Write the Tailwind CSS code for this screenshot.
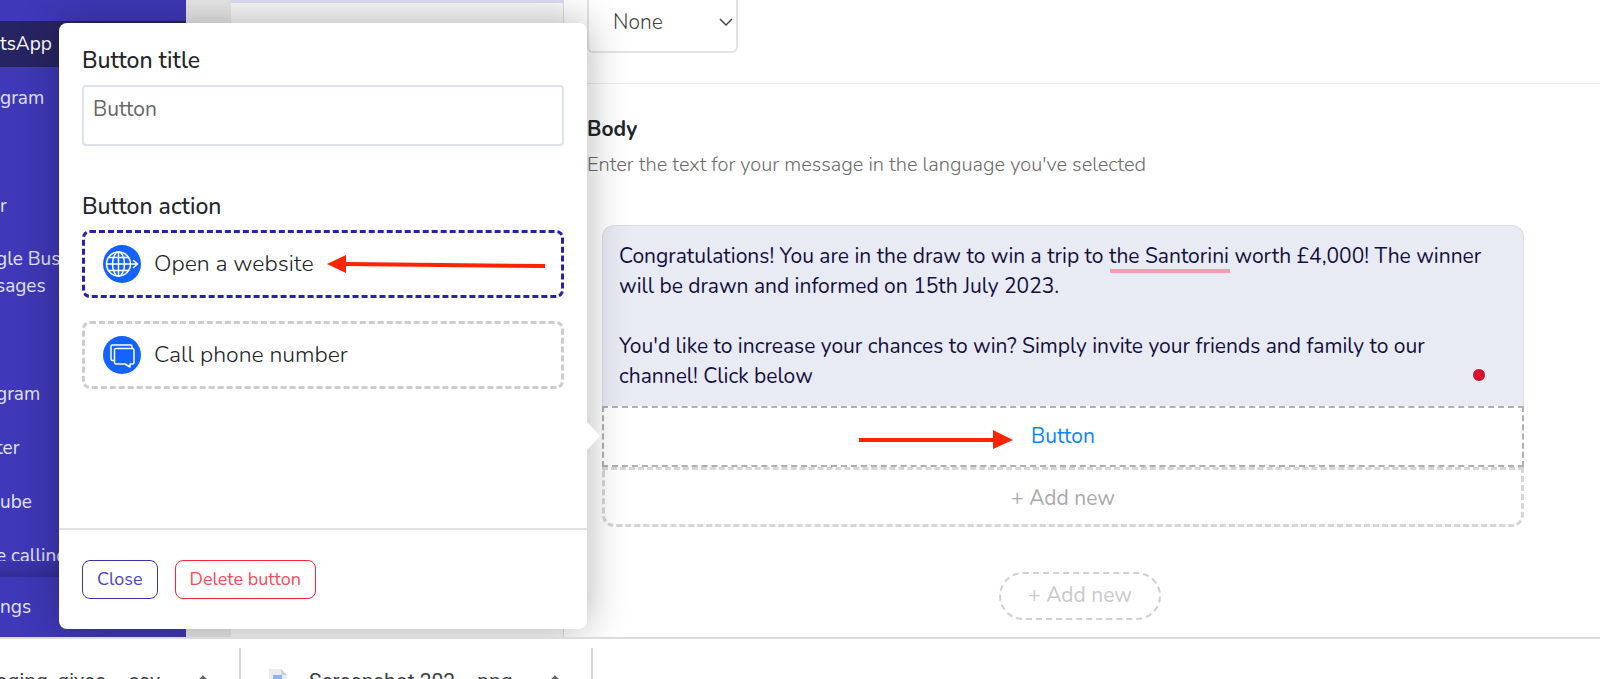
<!DOCTYPE html>
<html lang="en">
<head>
  <meta charset="UTF-8" />
  <meta name="viewport" content="width=device-width, initial-scale=1" />
  <title>Message Template</title>
  <script src="https://cdn.jsdelivr.net/npm/@tailwindcss/browser@4"></script>
</head>
<body class="h-screen flex flex-col overflow-hidden bg-white font-['Nunito','Lato',sans-serif] text-[#212529]">

  <div class="relative flex flex-1 min-h-0">

    <!-- Sidebar -->
    <aside class="w-[186px] shrink-0 flex flex-col overflow-hidden bg-[#3f38b8] text-[#e4e3f6] text-[19px] leading-[27px]">
      <nav class="flex-1 min-h-0 overflow-hidden whitespace-nowrap">
        <a href="#" class="-mt-[37px] h-[54px] flex items-center pl-2">ng</a>
        <a href="#" class="my-1 h-[46px] flex items-center bg-[#272463] text-white">tsApp</a>
        <a href="#" class="h-[54px] flex items-center">gram</a>
        <div class="h-[54px]"></div>
        <a href="#" class="h-[54px] flex items-center">r</a>
        <a href="#" class="-ml-1 h-[80px] flex items-center">gle Business<br>sages</a>
        <div class="h-[54px]"></div>
        <a href="#" class="-ml-1 h-[54px] flex items-center">gram</a>
        <a href="#" class="-ml-1 h-[54px] flex items-center">ter</a>
        <a href="#" class="h-[54px] flex items-center">ube</a>
        <a href="#" class="-ml-1 h-[54px] flex items-center">e calling</a>
      </nav>
      <div class="h-4 bg-linear-to-b from-[#3c35b0] to-[#332d98]"></div>
      <a href="#" class="h-[60px] flex items-center">ngs</a>
    </aside>

    <!-- Template list -->
    <div class="w-[45px] shrink-0 bg-[#e8e8e8]"></div>
    <div class="w-[333px] shrink-0 bg-[#f9f9f9] border-r border-[#dedede]">
      <div class="h-[3px] bg-[#dcdcf4]"></div>
    </div>

    <!-- Template editor -->
    <main class="flex-1 min-w-0">
      <div class="flex h-[84px] border-b border-[#ebebeb] pl-[23px]">
        <div class="relative w-[151px] -mt-2">
          <select aria-label="Header" class="w-full h-[61px] appearance-none rounded-md border-2 border-[#e4e4e4] bg-white pl-6 text-[21px] font-light text-[#444]">
            <option>None</option>
          </select>
          <svg class="absolute right-1 top-[22px] size-4 pointer-events-none" viewBox="0 0 16 16" fill="none" stroke="#444" stroke-width="1.5"><path d="M2 5l6 6 6-6" /></svg>
        </div>
      </div>

      <div class="pl-[23px] pt-[30px]">
        <h2 class="text-[21px] leading-[30px] font-bold">Body</h2>
        <p class="mt-1.5 text-[20px] leading-[30px] font-light text-[#6c6c6c]">Enter the text for your message in the language you've selected</p>
      </div>

      <div class="mt-[45px] ml-[38px] mr-[76px]">
        <div class="relative">
          <textarea aria-label="Body" spellcheck="false" class="block w-full h-[181px] resize-none overflow-hidden rounded-t-xl border border-b-0 border-[#dcdde0] bg-[#e9ebf4] px-4 pt-[15px] text-[21px] leading-[30px] text-[#14103f] outline-none">Congratulations! You are in the draw to win a trip to the Santorini worth £4,000! The winner will be drawn and informed on 15th July 2023.

You'd like to increase your chances to win? Simply invite your friends and family to our channel! Click below</textarea>
          <span class="absolute left-[508px] top-[44px] w-[120px] h-1 bg-[#f99bae]"></span>
          <span class="absolute right-[38px] bottom-6 size-[14px] rounded-full border border-white bg-[#d6112f]"></span>
        </div>
        <button type="button" class="relative block w-full h-[61px] border-2 border-dashed border-[#b0b0b0] text-[21px] text-[#0a84ff]">
          Button
          <svg class="absolute left-[255px] top-[22px] w-[154px] h-5" viewBox="0 0 154 20" fill="#ff2400"><path d="M0 8h134V0l20 10-20 9v-7H0z" /></svg>
        </button>
        <button type="button" class="block w-full h-[60px] rounded-b-xl border-3 border-dashed border-[#d6d6d6] pt-1 text-[21px] text-[#aaa]">+ Add new</button>
      </div>

      <div class="mt-[45px] flex justify-center pr-1">
        <button type="button" class="h-12 px-[27px] rounded-full border-2 border-dashed border-[#d0d0d0] text-[21px] text-[#cacaca]">+ Add new</button>
      </div>
    </main>

    <!-- Button popover -->
    <div role="dialog" aria-label="Edit button" class="absolute left-[59px] top-[23px] bottom-2 w-[528px] flex flex-col rounded-lg bg-white shadow-[0_0_40px_rgba(0,0,0,0.3)]">
      <form class="flex-1 px-[23px] pt-[22px]">
        <label for="title" class="block text-[23px] leading-8 font-medium">Button title</label>
        <input id="title" type="text" value="Button" class="mt-2 block w-full h-[61px] rounded-sm border-2 border-[#dde3ec] px-[9px] pb-[14px] text-[21px] text-[#666] outline-none" />

        <h3 class="mt-[45px] text-[23px] leading-8 font-medium">Button action</h3>
        <button type="button" class="mt-[7px] flex w-full h-[68px] items-center gap-[13px] rounded-lg border-3 border-dashed border-[#2a20b0] pl-[18px] text-[23px] font-light">
          <svg class="size-[38px]" viewBox="0 0 38 38" fill="none" stroke="white" stroke-width="1.5" stroke-linecap="round" stroke-linejoin="round">
            <circle cx="19" cy="19" r="19" fill="#1463ff" stroke="none" />
            <circle cx="15.5" cy="19" r="12" />
            <ellipse cx="15.5" cy="19" rx="6" ry="12" />
            <path d="M15.5 7v24M3.5 19H34M5.5 12.5h20M5.5 25.5h20M30.5 15.5L34.5 19l-4 3.5" />
          </svg>
          Open a website
          <svg class="w-[218px] h-5" viewBox="0 0 218 20" fill="#ff2400"><path d="M0 10L19 1v7l199 2v4L19 12v7z" /></svg>
        </button>
        <button type="button" class="mt-[23px] flex w-full h-[68px] items-center gap-[13px] rounded-lg border-3 border-dashed border-[#cdcdcd] pl-[18px] text-[23px] font-light">
          <svg class="size-[38px]" viewBox="0 0 38 38" fill="none" stroke="white" stroke-width="1.5" stroke-linejoin="round">
            <circle cx="19" cy="19" r="19" fill="#1463ff" stroke="none" />
            <path d="M11.5 24.5H9.5a1.5 1.5 0 0 1-1.5-1.5V10.5A1.5 1.5 0 0 1 9.5 9h18a1.5 1.5 0 0 1 1.5 1.5v1.5" />
            <path d="M13 12.5h16.5a1.5 1.5 0 0 1 1.5 1.5v12.5a1.5 1.5 0 0 1-1.5 1.5h-2.5v3l-5-3H13a1.5 1.5 0 0 1-1.5-1.5V14a1.5 1.5 0 0 1 1.5-1.5z" />
          </svg>
          Call phone number
        </button>
      </form>
      <div class="h-[101px] flex items-start gap-[17px] border-t-2 border-[#e1e1e1] px-[23px] pt-[30px]">
        <button type="button" class="h-[39px] px-[14px] rounded-lg border border-[#3a33b5] text-[18px] text-[#4b44c0]">Close</button>
        <button type="button" class="h-[39px] px-[14px] rounded-lg border border-[#fb2336] text-[18px] text-[#fb4a59]">Delete button</button>
      </div>
      <span class="absolute -right-[13px] top-[398px] w-[14px] h-[30px] bg-white [clip-path:polygon(0_0,100%_50%,0_100%)]"></span>
    </div>
  </div>

  <!-- Downloads bar -->
  <footer class="relative z-10 h-[42px] shrink-0 flex overflow-hidden border-t-2 border-[#dcdcdc] bg-white pt-[9px] font-['Roboto',sans-serif] text-[21px] leading-6 whitespace-nowrap text-[#3c4043]">
    <div class="w-[241px] shrink-0 flex justify-between border-r-2 border-[#d0d0d0] pr-[29px] pt-[21px]">
      <span class="-ml-1">aging_gives....csv</span>
      <svg class="mt-1 size-[14px]" viewBox="0 0 14 14" fill="none" stroke="#5f6368" stroke-width="2.5"><path d="M2 9l5-5 5 5" /></svg>
    </div>
    <div class="w-[352px] shrink-0 flex border-r-2 border-[#d0d0d0] pl-[28px] pr-[29px] pt-[21px]">
      <svg class="w-[18px] h-6 mr-[22px]" viewBox="0 0 18 24"><path d="M0 0h12l6 6v18H0z" fill="#ececee" /><path d="M12 0l6 6h-6z" fill="#cfd2d6" /><path d="M4 6h9v12H4z" fill="#8ab4f0" /></svg>
      <span class="flex-1">Screenshot 202....png</span>
      <svg class="mt-1 size-[14px]" viewBox="0 0 14 14" fill="none" stroke="#5f6368" stroke-width="2.5"><path d="M2 9l5-5 5 5" /></svg>
    </div>
  </footer>

</body>
</html>
